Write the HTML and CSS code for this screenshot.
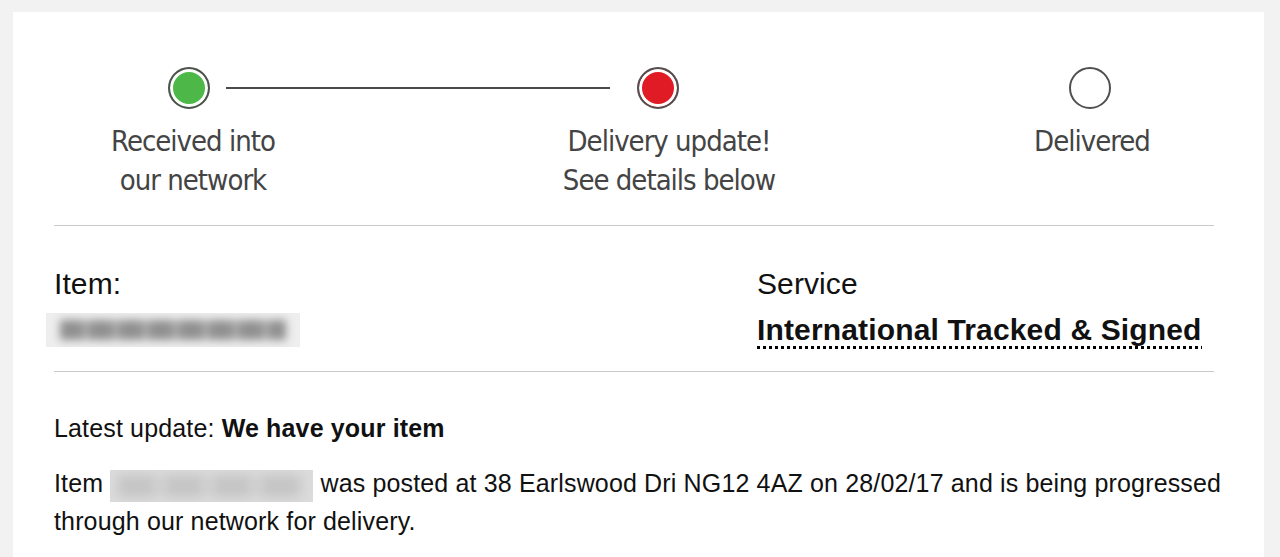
FILE: index.html
```html
<!DOCTYPE html>
<html lang="en">
<head>
    <meta charset="UTF-8">
    <meta name="viewport" content="width=device-width, initial-scale=1.0">
    <title>Track your item</title>
    <link rel="stylesheet" href="styles.css">
</head>

<body>
    <div class="panel">

        <div class="tracker">
            <div class="tracker-dots">
                <span class="dot dot-done dot-first"></span>
                <span class="dot-line"></span>
                <span class="dot dot-alert"></span>
                <span class="dot dot-last"></span>
            </div>
            <div class="tracker-labels">
                <p class="step-label label-first">Received into<br>our network</p>
                <p class="step-label label-second">Delivery update!<br>See details below</p>
                <p class="step-label label-third">Delivered</p>
            </div>
        </div>

        <div class="details">
            <div class="detail-col">
                <p class="detail-title">Item:</p>
                <div class="blur-number">
                    <span class="blur-ink"></span>
                </div>
            </div>
            <div class="detail-col">
                <p class="detail-title">Service</p>
                <p class="detail-value"><span class="service-name">International Tracked &amp; Signed</span></p>
            </div>
        </div>

        <div class="update">
            <p class="latest">Latest update: <strong>We have your item</strong></p>
            <p class="summary">Item <span class="blur-inline"><span class="blur-ink"></span></span> was posted at 38 Earlswood Dri NG12 4AZ on 28/02/17 and is being progressed through our network for delivery.</p>
        </div>

    </div>
</body>
</html>
```

FILE: styles.css
```css
body {
    margin: 0;
    padding: 12px 16px 0 13px;
    background-color: #f2f2f2;
    font-family: "Liberation Sans", Arial, sans-serif;
    color: #111;
}

p {
    margin: 0;
}

.panel {
    background-color: #fff;
    padding: 55px 50px 20px 41px;
}

/* progress tracker */

.tracker {
    border-bottom: 1px solid #c9c9c9;
    padding-bottom: 25px;
}

.tracker-dots {
    display: flex;
    align-items: center;
    height: 42px;
}

.dot {
    width: 42px;
    height: 42px;
    box-sizing: border-box;
    border: 2px solid #505050;
    border-radius: 50%;
    background-color: #fff;
    box-shadow: inset 0 0 0 3px #fff;
    flex-shrink: 0;
}

.dot-done {
    background-color: #4db848;
}

.dot-alert {
    background-color: #e01b25;
}

.dot-first {
    margin-left: 114px;
}

.dot-line {
    width: 384px;
    height: 2px;
    background-color: #4a4a4a;
    margin: 0 27px 0 16px;
}

.dot-last {
    margin-left: 390px;
}

.tracker-labels {
    display: flex;
    margin-top: 13px;
}

.step-label {
    width: 260px;
    flex-shrink: 0;
    text-align: center;
    white-space: nowrap;
    font-family: "DejaVu Sans Condensed", "DejaVu Sans", sans-serif;
    font-stretch: condensed;
    font-size: 29px;
    letter-spacing: -1px;
    line-height: 39px;
    color: #444;
}

.label-first {
    margin-left: 9px;
}

.label-second {
    margin-left: 216px;
}

.label-third {
    margin-left: 163px;
}

/* item and service */

.details {
    display: grid;
    grid-template-columns: 703px 1fr;
    padding-top: 41px;
    padding-bottom: 22px;
    border-bottom: 1px solid #c9c9c9;
}

.detail-title {
    font-size: 30px;
    line-height: 34px;
    letter-spacing: 0.1px;
}

.detail-value {
    margin-top: 12px;
    font-size: 30px;
    line-height: 34px;
    font-weight: bold;
    letter-spacing: 0.15px;
}

.service-name {
    display: inline-block;
    line-height: 30px;
    padding-bottom: 4px;
    background-image: linear-gradient(to right, #000 50%, transparent 50%);
    background-size: 6px 3px;
    background-repeat: repeat-x;
    background-position: left bottom;
}

.blur-number {
    width: 254px;
    height: 34px;
    margin: 12px 0 0 -8px;
    background-color: #eeeeee;
    display: flex;
    align-items: center;
    overflow: hidden;
}

.blur-ink {
    display: block;
    width: 100%;
    height: 20px;
    margin: 0 14px;
    background: repeating-linear-gradient(90deg, #909090 0 22px, #aaaaaa 22px 30px);
    filter: blur(4px);
}

/* latest update */

.update {
    margin-right: -20px;
    padding-top: 1px;
}

.latest {
    margin-top: 37px;
    font-size: 25px;
    line-height: 36px;
    letter-spacing: 0.15px;
}

.summary {
    margin-top: 18px;
    font-size: 25px;
    line-height: 38px;
    letter-spacing: 0.15px;
}

.blur-inline {
    display: inline-flex;
    align-items: center;
    width: 203px;
    height: 32px;
    vertical-align: -5px;
    background-color: #dcdcdc;
    overflow: hidden;
}

.blur-inline .blur-ink {
    margin: 0 8px;
    height: 22px;
    background: repeating-linear-gradient(90deg, #c4c4c4 0 36px, #d2d2d2 36px 48px);
    filter: blur(6px);
}
```
